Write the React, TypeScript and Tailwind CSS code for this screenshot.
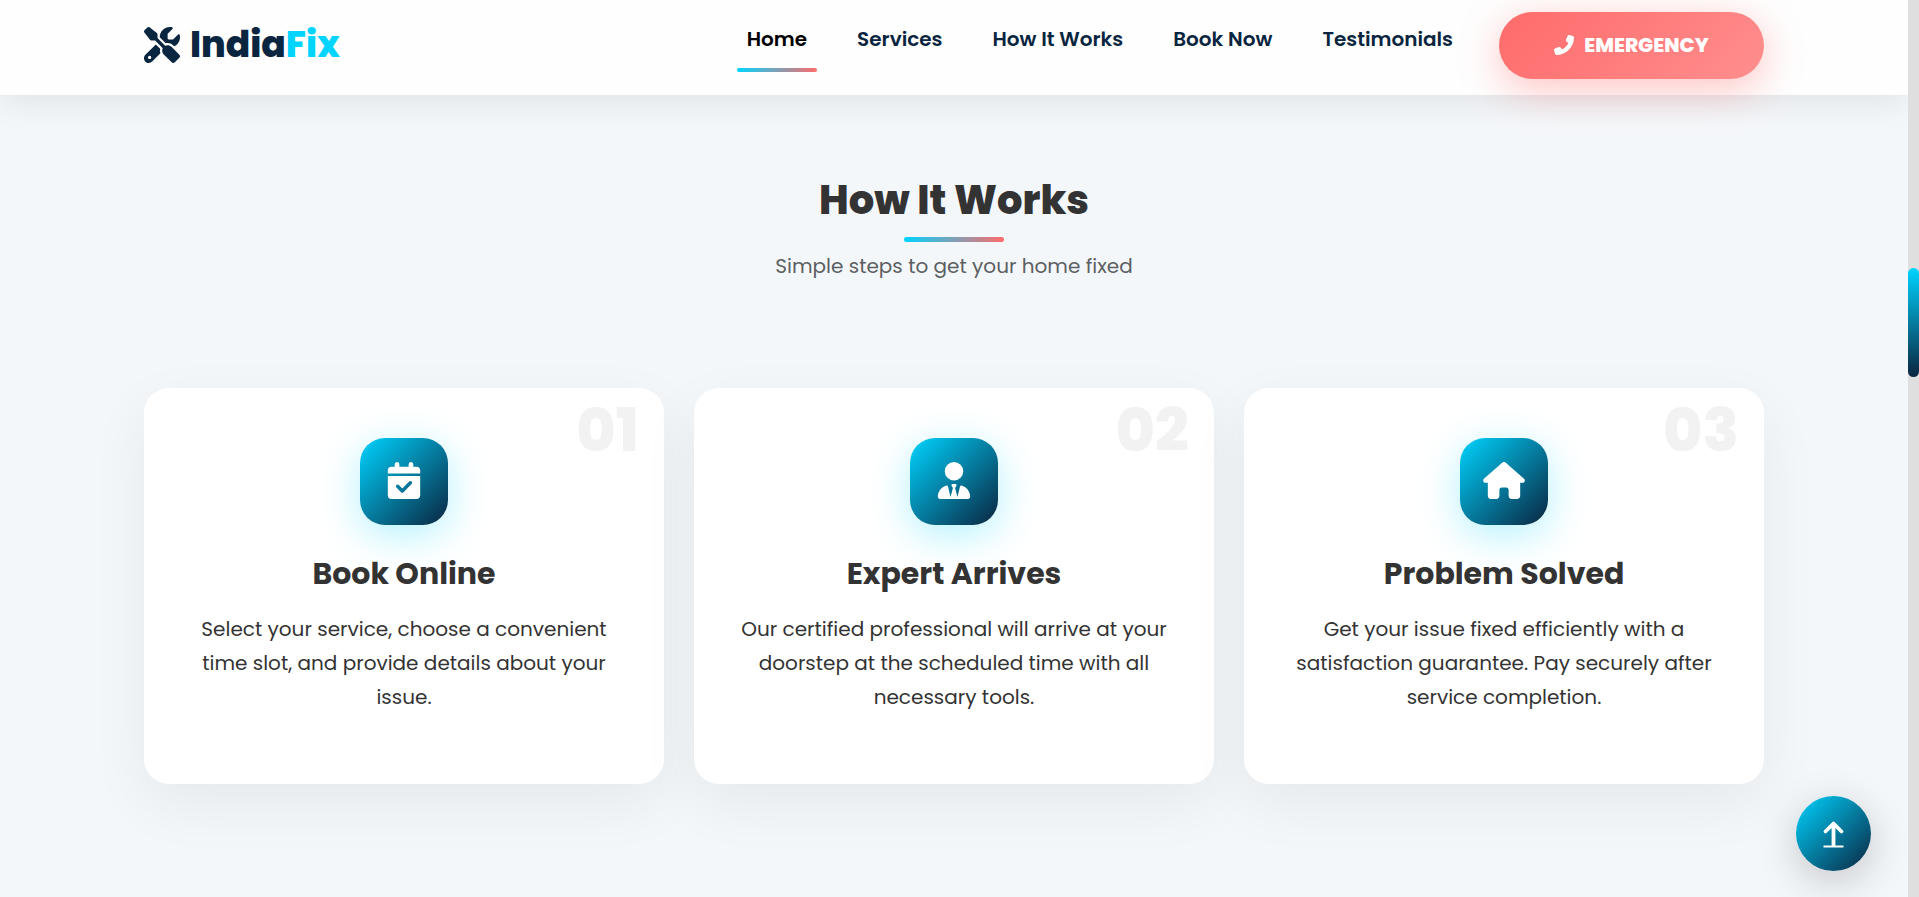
import React from "react";
import type { IconType } from "react-icons";
import {
  FaCalendarCheck,
  FaHouse,
  FaPhoneFlip,
  FaScrewdriverWrench,
  FaUserTie,
} from "react-icons/fa6";

const links = ["Home", "Services", "How It Works", "Book Now", "Testimonials"];

type Step = { number: string; title: string; text: string; Icon: IconType };

const steps: Step[] = [
  {
    number: "01",
    title: "Book Online",
    text: "Select your service, choose a convenient time slot, and provide details about your issue.",
    Icon: FaCalendarCheck,
  },
  {
    number: "02",
    title: "Expert Arrives",
    text: "Our certified professional will arrive at your doorstep at the scheduled time with all necessary tools.",
    Icon: FaUserTie,
  },
  {
    number: "03",
    title: "Problem Solved",
    text: "Get your issue fixed efficiently with a satisfaction guarantee. Pay securely after service completion.",
    Icon: FaHouse,
  },
];

function Header() {
  return (
    <header className="relative z-10 bg-[#fefefe] px-6 shadow-[0_8px_32px_rgba(0,0,0,0.08)]">
      <div className="mx-auto flex max-w-[1620px] items-start justify-between pt-3 pb-4">
        <a href="#home" className="flex items-center gap-2.5 text-4xl leading-[66px] font-extrabold text-[#0a2540]">
          <FaScrewdriverWrench className="size-9" />
          <span>
            India<span className="text-[#00d4ff]">Fix</span>
          </span>
        </a>
        <div className="flex items-start gap-9">
          <nav className="flex gap-[30px] pt-2.5">
            {links.map((label, i) => (
              <a
                key={label}
                href={"#" + label.toLowerCase().replaceAll(" ", "-")}
                className={
                  i === 0
                    ? "flex flex-col px-2.5 text-xl leading-[34px] font-semibold text-black"
                    : "flex flex-col px-2.5 text-xl leading-[34px] font-semibold text-[#0a2540]"
                }
              >
                {label}
                {i === 0 && (
                  <span className="-mx-2.5 mt-3 h-1 rounded-sm bg-linear-to-r/srgb from-[#00d4ff] to-[#ff6b6b]" />
                )}
              </a>
            ))}
          </nav>
          <a
            href="tel:112"
            className="flex h-[67px] w-[265px] items-center justify-center gap-2.5 rounded-full bg-linear-135/srgb from-[#ff6b6b] to-[#ff8e8e] pb-0.5 text-xl font-extrabold text-white shadow-[0_10px_40px_rgba(255,107,107,0.4)]"
          >
            <FaPhoneFlip className="size-5" />
            EMERGENCY
          </a>
        </div>
      </div>
    </header>
  );
}

function StepCard({ number, title, text, Icon }: Step) {
  return (
    <article className="relative flex flex-col items-center rounded-[25px] bg-white px-10 pt-[50px] pb-[70px] text-center shadow-[0_20px_60px_rgba(0,0,0,0.06)]">
      <span className="absolute top-3 right-[25px] text-[60px] leading-[60px] font-extrabold text-[#f2f2f2]">
        {number}
      </span>
      <div className="flex h-[87px] w-[88px] items-center justify-center rounded-[25px] bg-linear-135/srgb from-[#00d4ff] to-[#0a2540] pb-0.5 text-white shadow-[0_10px_40px_rgba(0,212,255,0.3)]">
        <Icon className="h-[37px] w-[42px]" />
      </div>
      <h3 className="mt-6 text-[30px] leading-[50px] font-bold text-[#333]">{title}</h3>
      <p className="mt-[13px] text-xl leading-[34px] text-[#333]">{text}</p>
    </article>
  );
}

export default function App() {
  return (
    <div className="flex min-h-screen bg-[#f4f7fa] font-['Poppins','Inter',sans-serif]">
      <div className="relative flex min-w-0 flex-1 flex-col overflow-hidden">
        <Header />
        <main className="px-6 pt-[75px] pb-28">
          <section id="how-it-works" className="mx-auto max-w-[1620px]">
            <div className="flex flex-col items-center text-center">
              <h2 className="text-[40px] leading-[60px] font-extrabold text-[#333]">How It Works</h2>
              <span className="mt-[7px] h-[5px] w-[100px] rounded-full bg-linear-to-r/srgb from-[#00d4ff] to-[#ff6b6b]" />
              <p className="mt-[7px] text-xl leading-[34px] text-[#5c5f62]">Simple steps to get your home fixed</p>
            </div>
            <div className="mt-[105px] grid grid-cols-3 gap-[30px]">
              {steps.map((step) => (
                <StepCard key={step.number} {...step} />
              ))}
            </div>
          </section>
        </main>
        <a
          href="#home"
          aria-label="Back to top"
          className="absolute right-[37px] bottom-[26px] flex size-[75px] items-center justify-center rounded-full bg-linear-135/srgb from-[#00d4ff] to-[#0a2540] text-white shadow-[0_10px_40px_rgba(0,0,0,0.2)]"
        >
          <svg viewBox="0 0 24 28" className="h-7 w-6" fill="none" stroke="currentColor">
            <path d="M11.5 3.5V25M3.5 11.5l8-8 8 8" strokeWidth="3.8" strokeLinecap="round" strokeLinejoin="round" />
            <path d="M1.5 26.5h20" strokeWidth="2" />
          </svg>
        </a>
      </div>
      <div className="w-[11px] bg-[#dfdfdf] pt-[268px]" aria-hidden="true">
        <div className="h-[109px] rounded-full bg-linear-to-b/srgb from-[#00d4ff] to-[#0a2540]" />
      </div>
    </div>
  );
}
